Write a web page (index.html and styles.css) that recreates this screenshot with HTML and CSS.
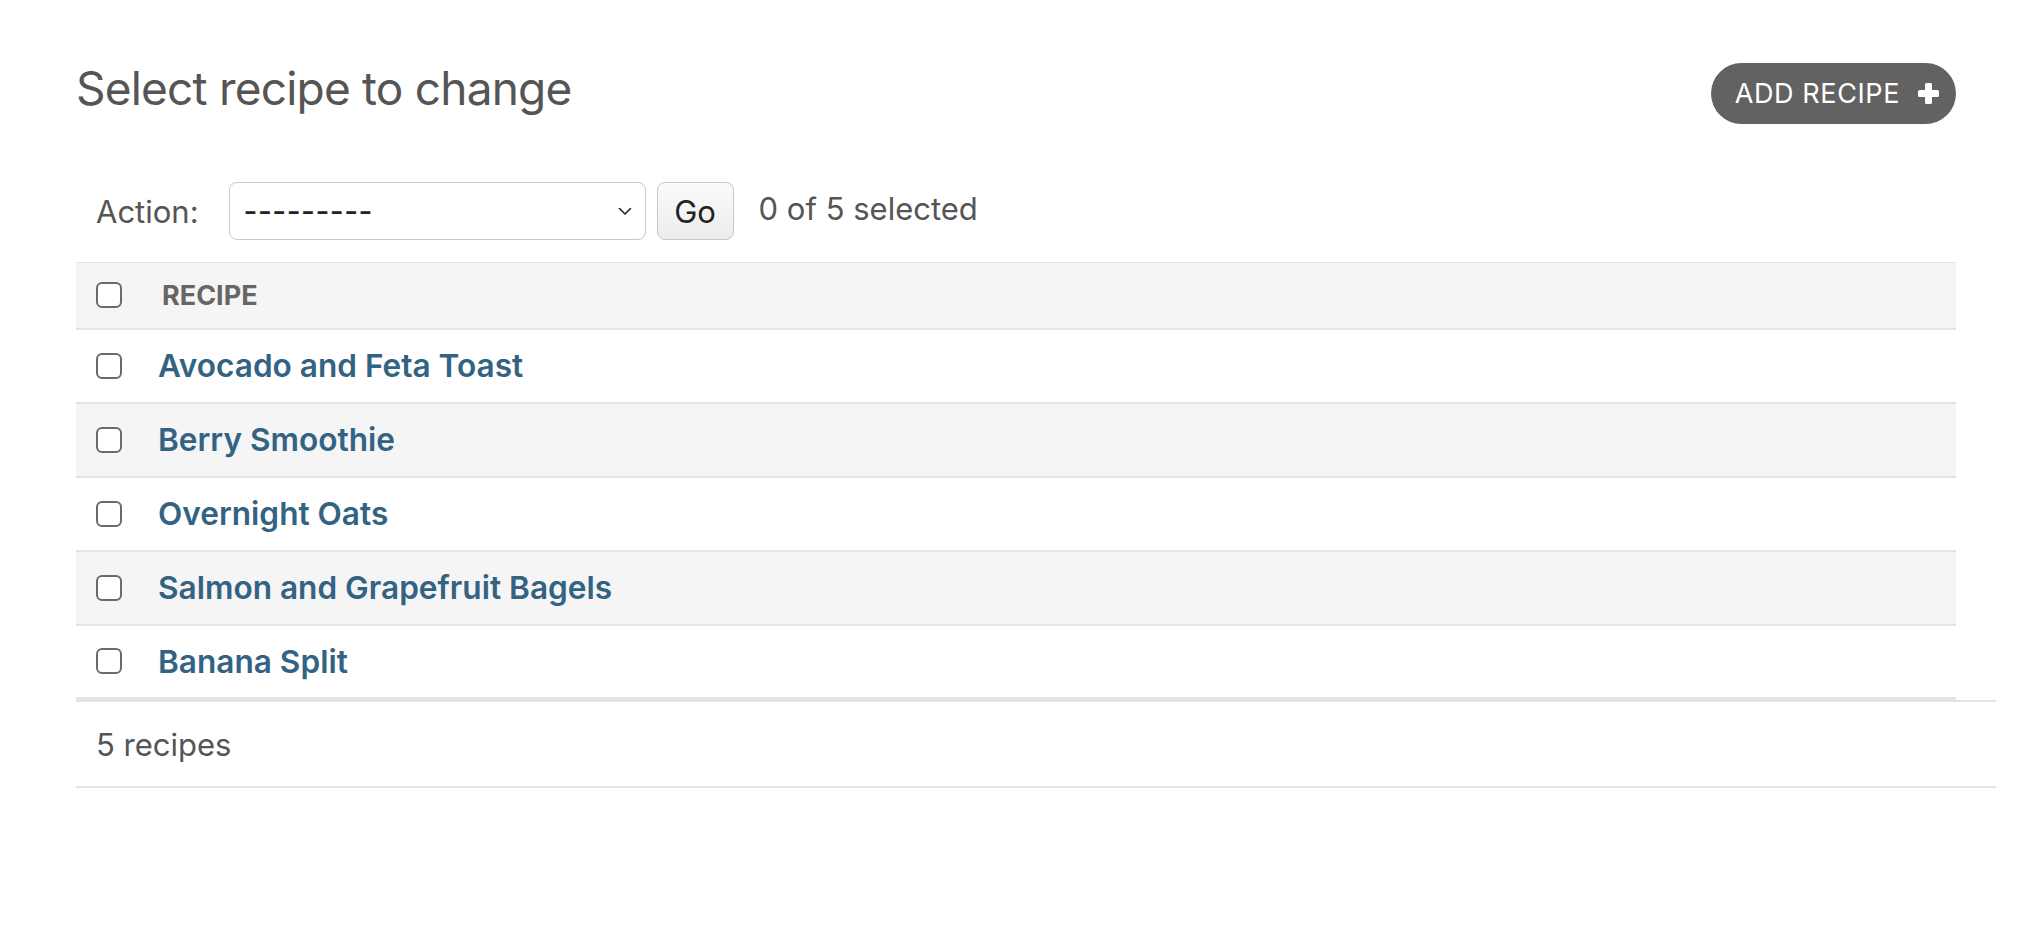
FILE: index.html
```html
<!DOCTYPE html>
<html lang="en">
<head>
<meta charset="utf-8">
<title>Select recipe to change</title>
<link rel="stylesheet" href="styles.css">
</head>
<body>
<div class="content">
  <div class="header">
    <h1 class="title">Select recipe to change</h1>
    <a class="add-btn" href="#">ADD RECIPE
      <svg class="plus" width="21" height="21" viewBox="0 0 21 21"><rect x="7" y="0" width="7" height="21" rx="1.5" fill="#fff"/><rect x="0" y="7" width="21" height="7" rx="1.5" fill="#fff"/></svg>
    </a>
  </div>
  <div class="actions">
    <label class="action-label">Action:</label>
    <div class="select">
      <span class="select-text">---------</span>
      <svg class="chevron" width="14" height="9" viewBox="0 0 14 9"><path d="M1.5 1.5 L7 7 L12.5 1.5" fill="none" stroke="#222" stroke-width="1.6" stroke-linecap="round" stroke-linejoin="round"/></svg>
    </div>
    <button class="go">Go</button>
    <span class="counter">0 of 5 selected</span>
  </div>
  <table class="results">
    <thead>
      <tr><th class="cb-col"><input type="checkbox" class="cb"></th><th class="name-col">RECIPE</th></tr>
    </thead>
    <tbody>
      <tr><td class="cb-col"><input type="checkbox" class="cb"></td><td class="name-col"><a href="#">Avocado and Feta Toast</a></td></tr>
      <tr class="alt"><td class="cb-col"><input type="checkbox" class="cb"></td><td class="name-col"><a href="#">Berry Smoothie</a></td></tr>
      <tr><td class="cb-col"><input type="checkbox" class="cb"></td><td class="name-col"><a href="#">Overnight Oats</a></td></tr>
      <tr class="alt"><td class="cb-col"><input type="checkbox" class="cb"></td><td class="name-col"><a href="#">Salmon and Grapefruit Bagels</a></td></tr>
      <tr><td class="cb-col"><input type="checkbox" class="cb"></td><td class="name-col"><a href="#">Banana Split</a></td></tr>
    </tbody>
  </table>
  <p class="paginator">5 recipes</p>
</div>
</body>
</html>
```

FILE: styles.css
```css
html, body {
  margin: 0;
  padding: 0;
  background: #fff;
}
body {
  font-family: "Inter", "Roboto", "Liberation Sans", sans-serif;
  color: #333;
}
.content {
  padding: 0 36px 0 76px;
}
.header {
  width: 1880px;
  display: flex;
  justify-content: space-between;
  align-items: flex-start;
  padding-top: 60px;
}
.title {
  margin: 0;
  font-size: 46px;
  line-height: 56px;
  font-weight: 400;
  color: #555;
  letter-spacing: -0.8px;
}
.add-btn {
  margin-top: 3px;
  height: 61px;
  box-sizing: border-box;
  display: flex;
  align-items: center;
  gap: 18px;
  padding: 0 17px 0 24px;
  border-radius: 31px;
  background: #626262;
  color: #fff;
  text-decoration: none;
  font-size: 27px;
  letter-spacing: 0.6px;
}
.plus { display: block; }
.actions {
  width: 1880px;
  box-sizing: border-box;
  margin-top: 58px;
  padding-left: 20px;
  height: 58px;
  display: flex;
  align-items: center;
}
.action-label {
  font-size: 31px;
  color: #555;
  margin-right: 30px;
}
.select {
  width: 417px;
  height: 58px;
  box-sizing: border-box;
  border: 1px solid #c8c8c8;
  border-radius: 8px;
  display: flex;
  align-items: center;
  justify-content: space-between;
  padding: 0 13px 0 14px;
  background: #fff;
}
.select-text {
  font-size: 30px;
  color: #222;
  font-weight: 500;
  letter-spacing: 0.5px;
}
.go {
  margin-left: 11px;
  width: 77px;
  height: 58px;
  border: 1px solid #c8c8c8;
  border-radius: 8px;
  background: linear-gradient(#fbfbfb, #ececec);
  font-family: inherit;
  font-size: 31px;
  color: #222;
  padding: 0;
}
.counter {
  margin-left: 25px;
  font-size: 31px;
  color: #555;
  position: relative;
  top: -3px;
}
.results {
  margin-top: 22px;
  width: 1880px;
  border-collapse: collapse;
}
.results th, .results td {
  padding: 0;
  text-align: left;
  vertical-align: middle;
}
.results thead tr {
  background: #f5f5f5;
  border-top: 1px solid #e4e4e4;
  border-bottom: 2px solid #e4e4e4;
  height: 66px;
}
.results th.name-col {
  font-size: 27px;
  font-weight: 700;
  color: #666;
  padding-left: 4px;
}
.results tbody tr {
  height: 74px;
  border-bottom: 2px solid #e4e4e4;
}
.results tbody tr.alt {
  background: #f5f5f5;
}
.results tbody tr:last-child {
  border-bottom: 3px solid #e4e4e4;
}
.cb-col {
  width: 62px;
  padding-left: 20px !important;
}
.cb {
  appearance: none;
  -webkit-appearance: none;
  margin: 0;
  width: 26px;
  height: 26px;
  box-sizing: border-box;
  border: 2px solid #6b6b6b;
  border-radius: 6px;
  background: #fff;
  display: block;
}
.results td.name-col a {
  font-size: 31.6px;
  font-weight: 600;
  color: #336382;
  text-decoration: none;
}
.paginator {
  margin: 0;
  width: 1920px;
  box-sizing: border-box;
  border-top: 2px solid #e4e4e4;
  border-bottom: 2px solid #e4e4e4;
  height: 88px;
  padding-left: 20px;
  display: flex;
  align-items: center;
  font-size: 31px;
  color: #555;
}
```
